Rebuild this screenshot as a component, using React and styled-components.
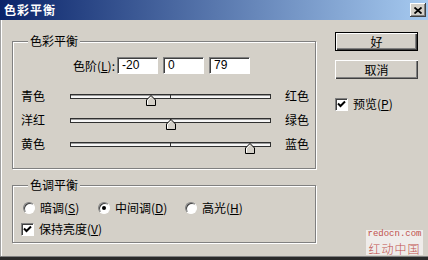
import React from "react"
import styled, { createGlobalStyle } from "styled-components"

const GlobalStyle = createGlobalStyle`
  body {
    margin: 0;
    font-family: "Noto Sans CJK SC", "Liberation Sans", sans-serif;
    font-size: 12px;
    color: #000;
  }
`

const sliders = [
  { left: "青色", right: "红色", value: -20 },
  { left: "洋红", right: "绿色", value: 0 },
  { left: "黄色", right: "蓝色", value: 79 },
]

const App = () => {
  return (
    <Window>
      <GlobalStyle />
      <TitleBar>
        <Title>色彩平衡</Title>
        <CloseButton>
          <svg width="8" height="7" viewBox="0 0 8 7">
            <path d="M0.5 0.5 L7.5 6.5 M7.5 0.5 L0.5 6.5" stroke="#000" strokeWidth="1.8" />
          </svg>
        </CloseButton>
      </TitleBar>
      <Body>
        <Main>
          <Group height={128}>
            <GroupTitle>色彩平衡</GroupTitle>
            <LevelsRow>
              <LevelsLabel>
                色阶(<U>L</U>):
              </LevelsLabel>
              <Field>-20</Field>
              <Field>0</Field>
              <Field>79</Field>
            </LevelsRow>
            <Sliders>
              {sliders.map((s) => (
                <SliderRow key={s.left}>
                  <SideLabel>{s.left}</SideLabel>
                  <Track>
                    <Tick />
                    <Thumb style={{ left: 100 + s.value - 5 }}>
                      <svg width="11" height="11" viewBox="0 0 11 11">
                        <path
                          d="M5 0.5 L9.5 5 L9.5 10.5 L0.5 10.5 L0.5 5 Z"
                          fill="#d4d0c8"
                          stroke="#000"
                        />
                        <path d="M1.5 9.5 L1.5 5.4 L5 1.9" fill="none" stroke="#fff" />
                      </svg>
                    </Thumb>
                  </Track>
                  <RightLabel>{s.right}</RightLabel>
                </SliderRow>
              ))}
            </Sliders>
          </Group>
          <Group height={58}>
            <GroupTitle>色调平衡</GroupTitle>
            <RadioRow>
              <RadioItem width={75}>
                <Radio />
                <Text>
                  暗调(<U>S</U>)
                </Text>
              </RadioItem>
              <RadioItem width={87}>
                <Radio checked />
                <Text>
                  中间调(<U>D</U>)
                </Text>
              </RadioItem>
              <RadioItem width={70}>
                <Radio />
                <Text>
                  高光(<U>H</U>)
                </Text>
              </RadioItem>
            </RadioRow>
            <CheckRow>
              <CheckBox>
                <CheckMark />
              </CheckBox>
              <Text>
                保持亮度(<U>V</U>)
              </Text>
            </CheckRow>
          </Group>
        </Main>
        <Side>
          <Button $default>好</Button>
          <Button>取消</Button>
          <PreviewRow>
            <CheckBox>
              <CheckMark />
            </CheckBox>
            <Text>
              预览(<U>P</U>)
            </Text>
          </PreviewRow>
        </Side>
      </Body>
      <Watermark>
        <WatermarkUrl>redocn.com</WatermarkUrl>
        <WatermarkName>红动中国</WatermarkName>
      </Watermark>
    </Window>
  )
}

const CheckMark = () => (
  <svg width="9" height="9" viewBox="0 0 9 9">
    <path d="M1 3.5 L3.5 6 L8 1.5" fill="none" stroke="#000" strokeWidth="2" />
  </svg>
)

const Window = styled.div`
  position: relative;
  width: 428px;
  height: 260px;
  box-sizing: border-box;
  background: #d4d0c8;
  box-shadow: inset 0 -3px 0 #2a2a2a, inset 0 -4px 0 #808080, inset 1px 0 0 #a0a0a0,
    inset 2px 0 0 #ffffff;
  overflow: hidden;
`

const TitleBar = styled.div`
  display: flex;
  align-items: center;
  justify-content: space-between;
  height: 20px;
  padding: 0 2px 0 4px;
  background: linear-gradient(to right, #0a246a, #a6caf0);
`

const Title = styled.div`
  color: #fff;
  font-weight: bold;
  font-size: 12px;
  line-height: 20px;
  letter-spacing: 1px;
`

const CloseButton = styled.div`
  display: flex;
  align-items: center;
  justify-content: center;
  width: 16px;
  height: 14px;
  box-sizing: border-box;
  background: #d4d0c8;
  box-shadow: inset -1px -1px 0 #404040, inset 1px 1px 0 #fff, inset -2px -2px 0 #808080;
`

const Body = styled.div`
  display: flex;
  gap: 19px;
  padding: 12px 0 0 12px;
`

const Main = styled.div`
  display: flex;
  flex-direction: column;
  gap: 16px;
  width: 304px;
  padding-top: 9px;
`

const Group = styled.div`
  position: relative;
  height: ${(p) => p.height}px;
  box-sizing: border-box;
  border: 1px solid #808080;
  box-shadow: inset 1px 1px 0 #fff, 1px 1px 0 #fff;
`

const GroupTitle = styled.span`
  position: absolute;
  top: -9px;
  left: 15px;
  padding: 0 2px;
  background: #d4d0c8;
  line-height: 16px;
`

const Text = styled.span`
  line-height: 16px;
  white-space: nowrap;
`

const U = styled.span`
  text-decoration: underline;
`

const LevelsRow = styled.div`
  display: flex;
  align-items: center;
  gap: 5px;
  margin-top: 15px;
  padding-left: 55px;
`

const LevelsLabel = styled.div`
  width: 47px;
  margin-right: -3px;
  text-align: right;
  line-height: 17px;
  white-space: nowrap;
`

const Field = styled.div`
  width: 41px;
  height: 17px;
  box-sizing: border-box;
  padding-left: 4px;
  background: #fff;
  border: 1px solid;
  border-color: #808080 #fff #fff #808080;
  box-shadow: inset 1px 1px 0 #404040;
  font-family: "Liberation Sans", sans-serif;
  font-size: 12px;
  line-height: 15px;
`

const Sliders = styled.div`
  display: flex;
  flex-direction: column;
  margin-top: 10px;
  padding-left: 8px;
`

const SliderRow = styled.div`
  display: flex;
  align-items: center;
  height: 24px;
`

const SideLabel = styled.div`
  width: 49px;
  line-height: 16px;
`

const RightLabel = styled.div`
  margin-left: 14px;
  line-height: 16px;
`

const Track = styled.div`
  position: relative;
  width: 201px;
  height: 5px;
  box-sizing: border-box;
  background: #f6f6f6;
  border: 1px solid #303030;
  box-shadow: inset 0 1px 0 #9a9a9a;
`

const Tick = styled.div`
  position: absolute;
  left: 99px;
  top: -1px;
  width: 1px;
  height: 5px;
  background: #303030;
`

const Thumb = styled.div`
  position: absolute;
  top: 0px;
  width: 11px;
  height: 11px;
  line-height: 0;
`

const RadioRow = styled.div`
  display: flex;
  align-items: center;
  height: 16px;
  margin-top: 14px;
  padding-left: 10px;
`

const RadioItem = styled.div`
  display: flex;
  align-items: center;
  gap: 5px;
  width: ${(p) => p.width}px;
`

const Radio = styled.span`
  position: relative;
  flex: none;
  width: 12px;
  height: 12px;
  box-sizing: border-box;
  border-radius: 50%;
  background: #fff;
  border: 1px solid;
  border-color: #808080 #fff #fff #808080;
  box-shadow: inset 1px 1px 0 #404040;

  &::after {
    content: "";
    display: ${(p) => (p.checked ? "block" : "none")};
    position: absolute;
    left: 3px;
    top: 3px;
    width: 4px;
    height: 4px;
    border-radius: 50%;
    background: #000;
  }
`

const CheckRow = styled.div`
  display: flex;
  align-items: center;
  gap: 5px;
  height: 16px;
  margin-top: 5px;
  padding-left: 8px;
`

const CheckBox = styled.span`
  display: flex;
  flex: none;
  align-items: center;
  justify-content: center;
  width: 13px;
  height: 13px;
  box-sizing: border-box;
  background: #fff;
  border: 1px solid;
  border-color: #808080 #fff #fff #808080;
  box-shadow: inset 1px 1px 0 #404040;
`

const Side = styled.div`
  display: flex;
  flex-direction: column;
  gap: 9px;
  width: 83px;
`

const Button = styled.div`
  display: flex;
  align-items: center;
  justify-content: center;
  height: 19px;
  box-sizing: border-box;
  background: #d4d0c8;
  border: ${(p) => (p.$default ? "1px solid #000" : "none")};
  box-shadow: inset 1px 1px 0 #fff, inset -1px -1px 0 #404040, inset -2px -2px 0 #808080;
  line-height: 16px;
`

const PreviewRow = styled.div`
  display: flex;
  align-items: center;
  gap: 5px;
  margin-top: 8px;
`

const Watermark = styled.div`
  position: absolute;
  right: 5px;
  bottom: 5px;
  width: 57px;
  display: flex;
  flex-direction: column;
  align-items: center;
  gap: 4px;
  background: #efecea;
  color: #c0504c;
`

const WatermarkUrl = styled.div`
  height: 9px;
  font-family: "Liberation Mono", monospace;
  font-size: 9px;
  line-height: 9px;
`

const WatermarkName = styled.div`
  height: 12px;
  font-size: 12px;
  line-height: 12px;
  letter-spacing: 1px;
  font-weight: 300;
`

export default App
